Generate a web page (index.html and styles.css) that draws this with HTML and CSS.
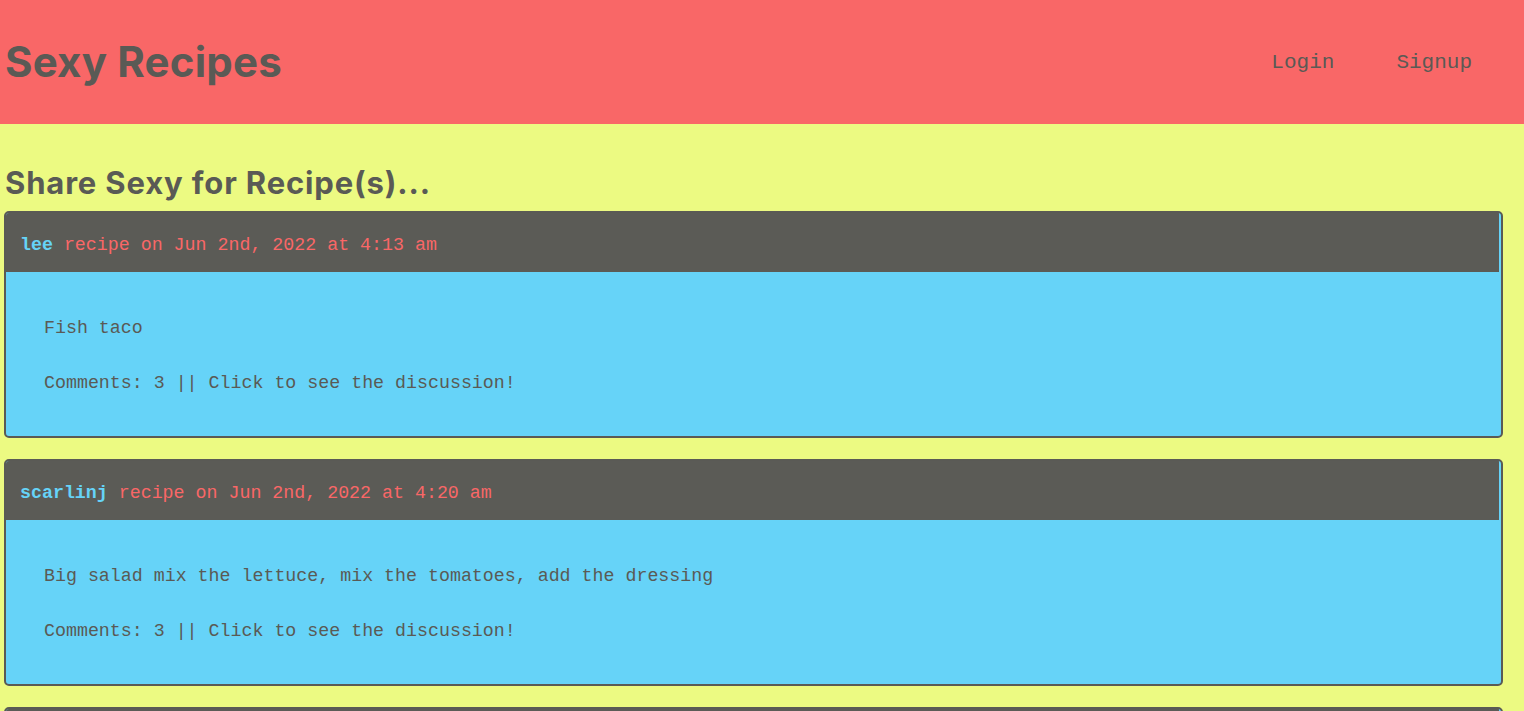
FILE: index.html
```html
<!DOCTYPE html>
<html>
<head>
<meta charset="utf-8">
<link rel="stylesheet" href="styles.css">
</head>
<body>
<header class="topbar">
  <h1 class="brand">Sexy Recipes</h1>
  <nav class="nav">
    <a class="nav-link" href="#">Login</a>
    <a class="nav-link" href="#">Signup</a>
  </nav>
</header>
<main class="content">
  <h2 class="page-title">Share Sexy for Recipe(s)...</h2>
  <div class="card">
    <div class="card-head"><span class="user">lee</span> recipe on Jun 2nd, 2022 at 4:13 am</div>
    <div class="card-body">
      <p>Fish taco</p>
      <p>Comments: 3 || Click to see the discussion!</p>
    </div>
  </div>
  <div class="card">
    <div class="card-head"><span class="user">scarlinj</span> recipe on Jun 2nd, 2022 at 4:20 am</div>
    <div class="card-body">
      <p>Big salad mix the lettuce, mix the tomatoes, add the dressing</p>
      <p>Comments: 3 || Click to see the discussion!</p>
    </div>
  </div>
  <div class="card">
    <div class="card-head"><span class="user">lee</span> recipe on Jun 2nd, 2022 at 4:25 am</div>
    <div class="card-body">
      <p>Tacos</p>
      <p>Comments: 3 || Click to see the discussion!</p>
    </div>
  </div>
</main>
</body>
</html>
```
FILE: styles.css
```css
html, body {
  margin: 0;
  padding: 0;
}
body {
  background: #ecfa82;
  color: #5a5a55;
  font-family: "Liberation Mono", monospace;
}
.topbar {
  background: #f96767;
  height: 124px;
  display: flex;
  align-items: center;
  justify-content: space-between;
  padding: 0 52px 0 5px;
}
.brand {
  margin: 0;
  font-family: Inter, "Noto Sans", sans-serif;
  font-weight: 700;
  font-size: 42px;
  letter-spacing: 0.2px;
  color: #5a5a55;
  position: relative;
  top: -1px;
}
.nav {
  display: flex;
  gap: 62px;
}
.nav-link {
  font-family: "Liberation Mono", monospace;
  font-size: 21px;
  color: #5a5a55;
  text-decoration: none;
}
.content {
  padding: 0 21px 0 4px;
}
.page-title {
  margin: 0;
  padding: 40px 0 9px 1px;
  font-family: Inter, "Noto Sans", sans-serif;
  font-weight: 700;
  font-size: 31px;
  letter-spacing: 0.85px;
  line-height: 38px;
  color: #5a5a55;
}
.card {
  border: 2px solid #5a5a55;
  border-radius: 5px;
  overflow: hidden;
  margin-bottom: 21px;
  background: #66d3f8;
}
.card-head {
  background: #5b5b56;
  color: #f96767;
  height: 53px;
  padding-top: 6px;
  line-height: 52px;
  padding-left: 14px;
  font-size: 18.3px;
  margin-right: 2px;
}
.user {
  color: #66d3f8;
  font-weight: 700;
}
.card-body {
  padding: 46px 38px 42px;
  font-size: 18.3px;
}
.card-body p {
  margin: 0 0 34px;
  line-height: 21px;
}
.card-body p:last-child {
  margin-bottom: 0;
}
```
